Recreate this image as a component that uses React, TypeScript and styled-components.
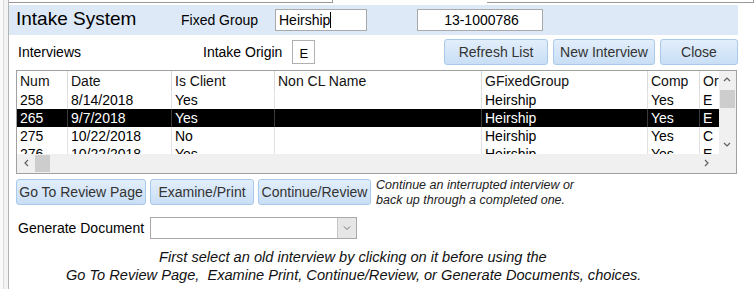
import styled, { createGlobalStyle } from "styled-components"

const GlobalStyle = createGlobalStyle`
  html, body {
    margin: 0;
    padding: 0;
    background: #ffffff;
    font-family: "Liberation Sans", Arial, sans-serif;
    color: #000;
  }
`

const Screen = styled.div`
  display: flex;
  width: 754px;
  height: 289px;
  overflow: hidden;
  background: #fff;
`

const SideStrip = styled.div`
  width: 9px;
  flex: none;
  background: #f3f3f3;
  border-left: 3px solid #fafafa;
  box-sizing: border-box;
  border-right: 1px solid #b4b4b4;
  box-shadow: inset 1px 0 0 #dcdcdc;
`

const Window = styled.div`
  flex: 1;
  min-width: 0;
  display: flex;
  flex-direction: column;
  padding-right: 16px;
`

const TopStrip = styled.div`
  height: 5px;
  display: flex;
  overflow: hidden;
  margin-right: -16px;
`

const TopSegment = styled.div<{ $w: number }>`
  width: ${(p) => p.$w}px;
  flex: none;
  height: 2px;
  border-bottom: 1px solid #9a9a9a;
  border-right: 1px solid #9a9a9a;
`

const TopGap = styled.div`
  width: 154px;
  flex: none;
`

const HeaderBand = styled.div`
  height: 30px;
  background: #dde9f6;
  display: flex;
  align-items: center;
  padding-left: 7px;
`

const Title = styled.div`
  width: 165px;
  font-size: 19px;
  margin-top: -2px;
`

const Label = styled.div<{ $w?: number }>`
  font-size: 14px;
  ${(p) => (p.$w ? `width: ${p.$w}px;` : "")}
  white-space: nowrap;
`

const TextBox = styled.div<{ $w: number; $center?: boolean; $ml?: number }>`
  width: ${(p) => p.$w}px;
  height: 22px;
  box-sizing: border-box;
  margin-left: ${(p) => p.$ml ?? 0}px;
  background: #fff;
  border: 1px solid #a9a9a9;
  font-size: 14px;
  padding-left: 3px;
  display: flex;
  align-items: center;
  justify-content: ${(p) => (p.$center ? "center" : "flex-start")};
`

const Caret = styled.span`
  display: inline-block;
  width: 1px;
  height: 16px;
  background: #000;
`

const ToolRow = styled.div`
  height: 34px;
  display: flex;
  align-items: center;
  padding-left: 9px;
`

const OriginBox = styled.div`
  width: 23px;
  height: 24px;
  box-sizing: border-box;
  border: 1px solid #b0b0b0;
  margin-left: 10px;
  display: flex;
  align-items: center;
  justify-content: center;
  font-size: 13px;
  padding-top: 3px;
`

const Spacer = styled.div`
  flex: 1;
`

const ButtonGroup = styled.div`
  display: flex;
  gap: 5px;
`

const Button = styled.div<{ $w: number }>`
  width: ${(p) => p.$w}px;
  flex: none;
  height: 26px;
  box-sizing: border-box;
  border: 1px solid #a6c9ec;
  border-radius: 3px;
  background: linear-gradient(#e2eefb, #c9def5);
  color: #333;
  font-size: 14px;
  display: flex;
  align-items: center;
  justify-content: center;
  white-space: nowrap;
`

const Grid = styled.div`
  margin-left: 7px;
  margin-top: 1px;
  width: 721px;
  height: 104px;
  box-sizing: border-box;
  border: 1px solid #a0a0a0;
  display: grid;
  grid-template-columns: 1fr 17px;
  grid-template-rows: 1fr 19px;
`

const GridBody = styled.div`
  overflow: hidden;
`

const Row = styled.div<{ $head?: boolean; $selected?: boolean }>`
  display: grid;
  grid-template-columns: 51px 104px 103px 207px 166px 52px 19px;
  height: ${(p) => (p.$head ? 20 : 18)}px;
  background: ${(p) => (p.$selected ? "#000" : "transparent")};
  color: ${(p) => (p.$selected ? "#fff" : "#000")};
`

const Cell = styled.div<{ $selected?: boolean }>`
  font-size: 14px;
  line-height: 18px;
  padding-left: 3px;
  border-right: 1px solid ${(p) => (p.$selected ? "#3a3a3a" : "#e2e2e2")};
  overflow: hidden;
  white-space: nowrap;
  &:last-child {
    border-right: none;
  }
`

const HeadCell = styled(Cell)`
  line-height: 20px;
  color: #111;
  border-right-color: #dadada;
`

const VScroll = styled.div`
  background: #f0f0f0;
  position: relative;
`

const HScroll = styled.div`
  background: #f0f0f0;
  position: relative;
`

const Corner = styled.div`
  background: #f0f0f0;
`

const Thumb = styled.div<{ $vertical?: boolean }>`
  position: absolute;
  background: #cdcdcd;
  ${(p) =>
    p.$vertical
      ? "left: 1px; right: 1px; top: 19px; height: 18px;"
      : "top: 1px; bottom: 1px; left: 18px; width: 15px;"}
`

const Arrow = styled.svg<{ $pos: string }>`
  position: absolute;
  ${(p) => p.$pos}
`

const ActionRow = styled.div`
  display: flex;
  align-items: center;
  gap: 4px;
  margin-left: 7px;
  margin-top: 5px;
  height: 26px;
`

const HelpText = styled.div`
  font-size: 12.5px;
  font-style: italic;
  color: #222;
  line-height: 15px;
  margin-left: 1px;
  margin-top: 2px;
  white-space: nowrap;
`

const DocRow = styled.div`
  display: flex;
  align-items: center;
  padding-left: 9px;
  margin-top: 12px;
  height: 22px;
`

const Select = styled.div`
  width: 207px;
  height: 22px;
  box-sizing: border-box;
  border: 1px solid #a9a9a9;
  margin-left: 9px;
  display: flex;
  justify-content: flex-end;
  background: #fff;
`

const SelectButton = styled.div`
  width: 18px;
  background: #e6e6e6;
  border-left: 1px solid #c8c8c8;
  display: flex;
  align-items: center;
  justify-content: center;
`

const Notice = styled.div`
  font-size: 14.6px;
  font-style: italic;
  color: #111;
  line-height: 18px;
  margin-top: 9px;
`

const NoticeLine = styled.div<{ $indent: number }>`
  padding-left: ${(p) => p.$indent}px;
  white-space: pre;
`

type Interview = {
  num: string
  date: string
  client: string
  name: string
  group: string
  comp: string
  origin: string
}

const interviews: Interview[] = [
  { num: "258", date: "8/14/2018", client: "Yes", name: "", group: "Heirship", comp: "Yes", origin: "E" },
  { num: "265", date: "9/7/2018", client: "Yes", name: "", group: "Heirship", comp: "Yes", origin: "E" },
  { num: "275", date: "10/22/2018", client: "No", name: "", group: "Heirship", comp: "Yes", origin: "C" },
  { num: "276", date: "10/22/2018", client: "Yes", name: "", group: "Heirship", comp: "Yes", origin: "E" },
]

const headers = ["Num", "Date", "Is Client", "Non CL Name", "GFixedGroup", "Comp", "Or"]

function Chevron({ dir, pos }: { dir: "up" | "down" | "left" | "right"; pos: string }) {
  const d = {
    up: "M1 5 L4 2 L7 5",
    down: "M1 2 L4 5 L7 2",
    left: "M5 1 L2 4 L5 7",
    right: "M2 1 L5 4 L2 7",
  }[dir]
  return (
    <Arrow $pos={pos} width="8" height="8" viewBox="0 0 8 8">
      <path d={d} fill="none" stroke="#606060" strokeWidth="1.2" />
    </Arrow>
  )
}

function App() {
  return (
    <>
      <GlobalStyle />
      <Screen>
        <SideStrip />
        <Window>
          <TopStrip>
            <TopSegment $w={323} />
            <TopGap />
            <TopSegment $w={266} />
          </TopStrip>
          <HeaderBand>
            <Title>Intake System</Title>
            <Label $w={94}>Fixed Group</Label>
            <TextBox $w={92}>
              Heirship
              <Caret />
            </TextBox>
            <TextBox $w={126} $ml={50} $center>
              13-1000786
            </TextBox>
          </HeaderBand>
          <ToolRow>
            <Label $w={185}>Interviews</Label>
            <Label>Intake Origin</Label>
            <OriginBox>E</OriginBox>
            <Spacer />
            <ButtonGroup>
              <Button $w={104}>Refresh List</Button>
              <Button $w={102}>New Interview</Button>
              <Button $w={78}>Close</Button>
            </ButtonGroup>
          </ToolRow>
          <Grid>
            <GridBody>
              <Row $head>
                {headers.map((h) => (
                  <HeadCell key={h}>{h}</HeadCell>
                ))}
              </Row>
              {interviews.map((r) => {
                const sel = r.num === "265"
                return (
                  <Row key={r.num} $selected={sel}>
                    <Cell $selected={sel}>{r.num}</Cell>
                    <Cell $selected={sel}>{r.date}</Cell>
                    <Cell $selected={sel}>{r.client}</Cell>
                    <Cell $selected={sel}>{r.name}</Cell>
                    <Cell $selected={sel}>{r.group}</Cell>
                    <Cell $selected={sel}>{r.comp}</Cell>
                    <Cell $selected={sel}>{r.origin}</Cell>
                  </Row>
                )
              })}
            </GridBody>
            <VScroll>
              <Chevron dir="up" pos="top: 5px; left: 4px;" />
              <Thumb $vertical />
              <Chevron dir="down" pos="bottom: 5px; left: 4px;" />
            </VScroll>
            <HScroll>
              <Chevron dir="left" pos="left: 6px; top: 5px;" />
              <Thumb />
              <Chevron dir="right" pos="right: 8px; top: 5px;" />
            </HScroll>
            <Corner />
          </Grid>
          <ActionRow>
            <Button $w={130}>Go To Review Page</Button>
            <Button $w={104}>Examine/Print</Button>
            <Button $w={113}>Continue/Review</Button>
            <HelpText>
              Continue an interrupted interview or
              <br />
              back up through a completed one.
            </HelpText>
          </ActionRow>
          <DocRow>
            <Label $w={123}>Generate Document</Label>
            <Select>
              <SelectButton>
                <svg width="8" height="6" viewBox="0 0 8 6">
                  <path d="M1 1.5 L4 4.5 L7 1.5" fill="none" stroke="#707070" strokeWidth="1" />
                </svg>
              </SelectButton>
            </Select>
          </DocRow>
          <Notice>
            <NoticeLine $indent={150}>First select an old interview by clicking on it before using the</NoticeLine>
            <NoticeLine $indent={57}>Go To Review Page,  Examine Print, Continue/Review, or Generate Documents, choices.</NoticeLine>
          </Notice>
        </Window>
      </Screen>
    </>
  )
}

export default App
